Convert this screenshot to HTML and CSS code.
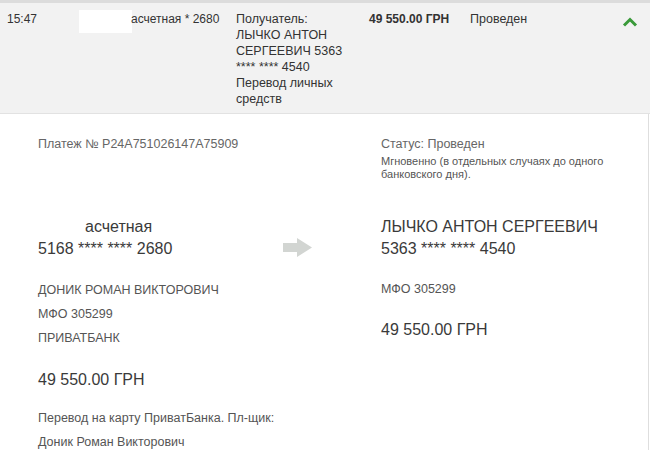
FILE: index.html
```html
<!DOCTYPE html>
<html lang="ru">
<head>
<meta charset="utf-8">
<link rel="stylesheet" href="styles.css">
</head>
<body>
<div class="topstrip"></div>
<div class="row-head">
  <div class="c-time">15:47</div>
  <div class="c-card"><span class="mask"></span><span class="card-text">асчетная * 2680</span></div>
  <div class="c-recv">
    <div>Получатель:</div>
    <div>ЛЫЧКО АНТОН СЕРГЕЕВИЧ 5363 **** **** 4540</div>
    <div>Перевод личных средств</div>
  </div>
  <div class="c-amount">49 550.00 ГРН</div>
  <div class="c-status">Проведен</div>
  <div class="c-toggle">
    <svg width="16" height="10" viewBox="0 0 16 10"><path d="M2 8.5 L8 2.5 L14 8.5" fill="none" stroke="#3a9a3a" stroke-width="3"/></svg>
  </div>
</div>
<div class="detail">
  <div class="col-left">
    <div class="small">Платеж № P24A751026147A75909</div>
    <div class="big first-big">асчетная</div>
    <div class="big">5168 **** **** 2680</div>
    <div class="line gap-after-card">ДОНИК РОМАН ВИКТОРОВИЧ</div>
    <div class="line">МФО 305299</div>
    <div class="line">ПРИВАТБАНК</div>
    <div class="big amount-left">49 550.00 ГРН</div>
    <div class="line purpose">Перевод на карту ПриватБанка. Пл-щик:</div>
    <div class="line">Доник Роман Викторович</div>
  </div>
  <div class="col-arrow">
    <svg width="30" height="20" viewBox="0 0 30 20"><path d="M0 5 H14 V0 L29 9.5 L14 19 V14 H0 Z" fill="#d2d5d2"/></svg>
  </div>
  <div class="col-right">
    <div class="small">Статус: Проведен</div>
    <div class="note">Мгновенно (в отдельных случаях до одного банковского дня).</div>
    <div class="big right-big">ЛЫЧКО АНТОН СЕРГЕЕВИЧ</div>
    <div class="big">5363 **** **** 4540</div>
    <div class="line mfo-right">МФО 305299</div>
    <div class="big amount-right">49 550.00 ГРН</div>
  </div>
</div>
</body>
</html>
```
FILE: styles.css
```css
html, body {
  margin: 0;
  padding: 0;
  background: #ffffff;
  font-family: "Liberation Sans", Arial, sans-serif;
  width: 650px;
  height: 450px;
  overflow: hidden;
}
.topstrip {
  height: 3px;
  background: #dcdcdc;
}
.row-head {
  display: flex;
  background: #f2f2f2;
  border-bottom: 1px solid #e2e2e2;
  height: 111px;
  box-sizing: border-box;
  padding-top: 8px;
  font-size: 12px;
  line-height: 16px;
  color: #333;
}
.c-time {
  width: 72px;
  padding-left: 7px;
}
.c-card {
  width: 158px;
  display: flex;
  align-items: flex-start;
}
.mask {
  display: inline-block;
  width: 53px;
  height: 23px;
  margin-top: -1px;
  background: #ffffff;
}
.card-text {
  margin-left: -1px;
}
.c-recv {
  width: 120px;
  margin-left: -1px;
  font-size: 12.5px;
}
.c-amount {
  margin-left: 13px;
  width: 101px;
  font-weight: bold;
}
.c-status {
  width: 150px;
  font-size: 12.5px;
}
.c-toggle {
  padding-top: 4px;
  padding-left: 2px;
}
.detail {
  display: flex;
  width: 649px;
  height: 336px;
  border-right: 1px solid #dedede;
  box-sizing: border-box;
  padding: 22px 0 0 38px;
  color: #555;
}
.col-left {
  width: 245px;
  display: flex;
  flex-direction: column;
}
.col-arrow {
  width: 98px;
  padding-top: 102px;
}
.col-right {
  display: flex;
  flex-direction: column;
}
.small {
  font-size: 12.5px;
  line-height: 16px;
  color: #666;
}
.note {
  font-size: 11px;
  line-height: 13px;
  margin-top: 3px;
  width: 240px;
  color: #555;
}
.big {
  font-size: 16px;
  line-height: 22px;
  color: #3a3a3a;
}
.first-big {
  margin-top: 64px;
  padding-left: 47px;
}
.right-big {
  margin-top: 35px;
}
.line {
  font-size: 12.5px;
  line-height: 24px;
  color: #555;
}
.gap-after-card {
  margin-top: 18px;
}
.amount-left {
  margin-top: 19px;
}
.purpose {
  margin-top: 15px;
}
.mfo-right {
  margin-top: 17px;
}
.amount-right {
  margin-top: 18px;
}
```
